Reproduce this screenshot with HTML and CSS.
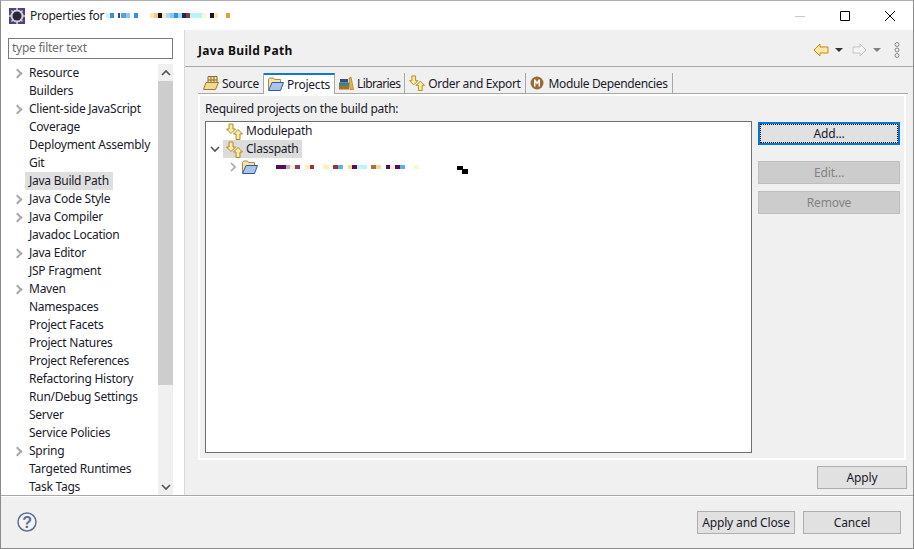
FILE: index.html

```html
<!DOCTYPE html>
<html lang="en">
<head>
  <meta charset="UTF-8" />
  <title>Properties</title>
  <link rel="stylesheet" href="styles.css">
</head>
<body>

<svg class="defs" width="0" height="0">
  <symbol id="ico-swap" viewBox="0 0 17 17">
    <path d="M2.500.5h4v5H9L4.500 10 0 5.500h2.500z" transform="translate(.5 .5)" fill="#fbe9a8" stroke="#b08a1e"/>
    <path d="M12 6.500 16.500 11H14v5.500h-4V11H7.500z" fill="#fbe9a8" stroke="#b08a1e"/>
  </symbol>
  <symbol id="ico-open" viewBox="0 0 16 14">
    <path d="M.5 13V2.500l1-1.500h4l1 1.500h6V5" fill="#f6e3a6" stroke="#a88a50"/>
    <path d="M.5 13.500 4 5.500h11.500l-3 8z" fill="#a9c4ea" stroke="#34589c"/>
  </symbol>
  <symbol id="ico-source" viewBox="0 0 16 14">
    <path d="M5 .5h9v7H5z" fill="#f6e3a6" stroke="#8a6a30"/>
    <path d="M8 .5v7M11 .5v7M5 4h9" stroke="#8a6a30" fill="none"/>
    <path d="M.5 13.500 3 6.500h12.500l-3 7z" fill="#f3d990" stroke="#a07c30"/>
  </symbol>
</svg>

<div class="window">

  <div class="titlebar">
    <svg class="app-icon" viewBox="0 0 16 16" width="16" height="16">
      <rect width="16" height="16" fill="#51407e"/>
      <circle cx="8" cy="8" r="6.500" fill="#d0d0d6"/>
      <circle cx="8" cy="8" r="4.500" fill="#2a2838"/>
      <path d="M8 0v3M8 13v3M0 8h3M13 8h3M2.500 2.500l2 2M13.500 2.500l-2 2M2.500 13.500l2-2M13.500 13.500l-2-2" stroke="#d0d0d6" stroke-width="1.500"/>
    </svg>
    <span class="title-text">Properties for</span>
    <span class="blur blur-title"></span>
    <div class="win-btns">
      <span class="win-btn"><svg width="12" height="12" viewBox="0 0 12 12"><path d="M1 6.500h10" stroke="#c8c8c8"/></svg></span>
      <span class="win-btn"><svg width="12" height="12" viewBox="0 0 12 12"><path d="M1.500 1.500h9v9h-9z" fill="none" stroke="#000"/></svg></span>
      <span class="win-btn"><svg width="12" height="12" viewBox="0 0 12 12"><path d="M1 1l10 10M11 1 1 11" stroke="#000"/></svg></span>
    </div>
  </div>

  <div class="body">
    <aside class="sidebar">
      <div class="filter">type filter text</div>
      <div class="nav">
        <ul class="nav-list">
          <li class="has-kids">Resource</li>
          <li>Builders</li>
          <li class="has-kids">Client-side JavaScript</li>
          <li>Coverage</li>
          <li>Deployment Assembly</li>
          <li>Git</li>
          <li class="selected">Java Build Path</li>
          <li class="has-kids">Java Code Style</li>
          <li class="has-kids">Java Compiler</li>
          <li>Javadoc Location</li>
          <li class="has-kids">Java Editor</li>
          <li>JSP Fragment</li>
          <li class="has-kids">Maven</li>
          <li>Namespaces</li>
          <li>Project Facets</li>
          <li>Project Natures</li>
          <li>Project References</li>
          <li>Refactoring History</li>
          <li>Run/Debug Settings</li>
          <li>Server</li>
          <li>Service Policies</li>
          <li class="has-kids">Spring</li>
          <li>Targeted Runtimes</li>
          <li>Task Tags</li>
        </ul>
        <div class="scrollbar">
          <div class="scroll-btn"><svg width="10" height="6" viewBox="0 0 10 6"><path d="M1 5l4-4 4 4" fill="none" stroke="#505050" stroke-width="1.600"/></svg></div>
          <div class="scroll-thumb"></div>
          <div class="scroll-track"></div>
          <div class="scroll-btn"><svg width="10" height="6" viewBox="0 0 10 6"><path d="M1 1l4 4 4-4" fill="none" stroke="#505050" stroke-width="1.600"/></svg></div>
        </div>
      </div>
    </aside>

    <main class="content">
      <header class="page-head">
        <h1>Java Build Path</h1>
        <div class="page-tools">
          <svg width="16" height="14" viewBox="0 0 16 14"><path d="M7 1 1 7l6 6v-3h8V4H7z" fill="#fbe9a8" stroke="#c98a12"/></svg>
          <span class="caret"></span>
          <svg class="fwd" width="15" height="14" viewBox="0 0 15 14"><path d="M8 1l6 6-6 6v-3H1V4h7z" fill="#f4f4f4" stroke="#c4c4c4"/></svg>
          <span class="caret caret-off"></span>
          <svg class="more" width="6" height="16" viewBox="0 0 6 16"><g fill="none" stroke="#8a8a8a"><circle cx="3" cy="2.500" r="2"/><circle cx="3" cy="8" r="2"/><circle cx="3" cy="13.500" r="2"/></g></svg>
        </div>
      </header>

      <div class="tabs">
        <div class="tab tab-first"><svg class="tab-ico" width="16" height="14"><use href="#ico-source"/></svg>Source</div>
        <div class="tab active"><svg class="tab-ico" width="16" height="14"><use href="#ico-open"/></svg>Projects</div>
        <div class="tab tab-libs">
          <svg class="tab-ico" width="16" height="16" viewBox="0 0 16 16">
            <rect x="1" y="11" width="10" height="3.500" fill="#b5682c"/>
            <rect x="1" y="7.500" width="10" height="3.500" fill="#2f8a80"/>
            <rect x="2" y="4" width="8" height="3.500" fill="#3a4a80"/>
            <path d="M11 3l2-1 2.500 12.500H12z" fill="#e8b24a" stroke="#9a6a18" stroke-width=".6"/>
          </svg>Libraries</div>
        <div class="tab tab-order"><svg class="tab-ico" width="16" height="16"><use href="#ico-swap"/></svg>Order and Export</div>
        <div class="tab tab-module">
          <svg class="tab-ico tab-ico-m" width="14" height="14" viewBox="0 0 14 14">
            <circle cx="7" cy="7" r="6.500" fill="#9a6a38"/>
            <path d="M4 10.500v-7h1.500L7 6l1.500-2.500H10v7H8.500V6.500L7 8.500l-1.500-2v4z" fill="#fff"/>
          </svg>Module Dependencies</div>
      </div>

      <section class="panel">
        <div class="panel-label">Required projects on the build path:</div>
        <div class="panel-row">
          <div class="tree">
            <div class="tree-row">
              <span class="twist"></span>
              <span class="node"><svg width="17" height="17"><use href="#ico-swap"/></svg><span class="node-text">Modulepath</span></span>
            </div>
            <div class="tree-row">
              <span class="twist"><svg width="10" height="6" viewBox="0 0 10 6"><path d="M1 1l4 4 4-4" fill="none" stroke="#505050" stroke-width="1.600"/></svg></span>
              <span class="node node-sel"><svg width="17" height="17"><use href="#ico-swap"/></svg><span class="node-text">Classpath</span></span>
            </div>
            <div class="tree-row tree-child">
              <span class="twist"><svg width="6" height="10" viewBox="0 0 6 10"><path d="M1 1l4 4-4 4" fill="none" stroke="#a8a8a8" stroke-width="1.600"/></svg></span>
              <span class="node node-project"><svg width="16" height="14"><use href="#ico-open"/></svg><span class="blur blur-path"></span></span>
            </div>
          </div>
          <div class="side-btns">
            <button class="btn btn-focus"><span>Add...</span></button>
            <button class="btn btn-off btn-edit">Edit...</button>
            <button class="btn btn-off">Remove</button>
          </div>
        </div>
      </section>

      <div class="apply-row"><button class="btn btn-apply">Apply</button></div>
    </main>
  </div>

  <footer class="footer">
    <svg width="20" height="20" viewBox="0 0 20 20">
      <circle cx="10" cy="10" r="9" fill="#f4f4f6" stroke="#5f7090" stroke-width="1.500"/>
      <text x="10" y="15.500" text-anchor="middle" class="help-mark">?</text>
    </svg>
    <div class="footer-btns">
      <button class="btn btn-foot">Apply and Close</button>
      <button class="btn btn-foot">Cancel</button>
    </div>
  </footer>

</div>

</body>
</html>
```

FILE: styles.css

```css
body {
  margin: 0;
  font-family: "Noto Sans", "Open Sans", sans-serif;
  font-size: 12px;
  letter-spacing: -0.25px;
  color: #1a1a2a;
  background-color: #f0f0f0;
}

.defs {
  display: block;
  height: 0;
}

.window {
  box-sizing: border-box;
  width: 914px;
  height: 549px;
  border: 1px solid #8a8a8a;
  border-top-color: #b0b0b0;
  display: flex;
  flex-direction: column;
  overflow: hidden;
}

/* title bar */
.titlebar {
  height: 29px;
  flex: none;
  background-color: #fff;
  display: flex;
  align-items: center;
  padding-left: 8px;
}

.app-icon {
  margin-right: 5px;
}

.title-text {
  color: #222;
}

.blur {
  display: block;
  height: 5px;
}

.blur-title {
  width: 124px;
  margin-left: 2px;
  margin-bottom: 1px;
  background: linear-gradient(90deg,
    #cff4ff 0 4px, #3a8fdc 4px 8px, #fff 8px 12px, #2a4a9a 12px 14px, #fff 14px 15px,
    #5a9fd8 15px 20px, #8fc8ee 20px 24px, #fff 24px 28px, #3a8fdc 28px 32px,
    #fff 32px 44px, #fde9b0 44px 48px, #f5c690 48px 52px, #111 52px 56px,
    #f5e9c0 56px 60px, #9ee0f0 60px 64px, #8fc8ee 64px 68px, #3a8fdc 68px 72px,
    #9ee0f0 72px 76px, #1a2a50 76px 80px, #8a3a3a 80px 84px, #b8f4ff 84px 96px,
    #fdf8c8 96px 100px, #fff 100px 104px, #1a1030 104px 108px, #fde9b0 108px 112px,
    #fff 112px 120px, #e0a040 120px 124px);
}

.win-btns {
  margin-left: auto;
  margin-right: 1px;
  display: flex;
}

.win-btn {
  width: 45px;
  display: flex;
  justify-content: center;
}

/* main area */
.body {
  flex: 1;
  display: flex;
  min-height: 0;
}

.sidebar {
  width: 165px;
  flex: none;
  background-color: #fff;
  border-right: 1px solid #d8d8d8;
  display: flex;
  flex-direction: column;
  padding: 8px 11px 0 7px;
}

.filter {
  box-sizing: border-box;
  height: 21px;
  line-height: 18px;
  border: 1px solid #7a7a7a;
  padding-left: 3px;
  color: #6d6d6d;
  flex: none;
}

.nav {
  flex: 1;
  display: flex;
  margin-top: 5px;
  min-height: 0;
}

.nav-list {
  list-style: none;
  margin: 0;
  padding: 0;
  flex: 1;
  overflow: hidden;
}

.nav-list li {
  height: 18px;
  line-height: 18px;
  padding-left: 21px;
  white-space: nowrap;
  position: relative;
}

.nav-list li.has-kids::before {
  content: "";
  position: absolute;
  left: 6px;
  top: 6px;
  width: 5px;
  height: 5px;
  border-top: 2px solid #a8a8a8;
  border-right: 2px solid #a8a8a8;
  transform: rotate(45deg);
}

.nav-list li.selected {
  background: linear-gradient(90deg, transparent 17px, #dfdfdf 17px 105px, transparent 105px);
}

.scrollbar {
  width: 15px;
  flex: none;
  display: flex;
  flex-direction: column;
  background-color: #f0f0f0;
}

.scroll-btn {
  height: 17px;
  flex: none;
  display: flex;
  align-items: center;
  justify-content: center;
}

.scroll-thumb {
  height: 304px;
  flex: none;
  background-color: #cdcdcd;
}

.scroll-track {
  flex: 1;
}

/* right side */
.content {
  flex: 1;
  display: flex;
  flex-direction: column;
  min-width: 0;
  background-color: #f0f0f0;
}

.page-head {
  height: 32px;
  flex: none;
  border-bottom: 1px solid #a8a8a8;
  display: flex;
  align-items: center;
  padding: 4px 13px 0 13px;
}

.page-head h1 {
  margin: 0;
  font-size: 12px;
  font-weight: 700;
  letter-spacing: 0.33px;
  color: #111;
}

.page-tools {
  margin-left: auto;
  display: flex;
  align-items: center;
}

.page-tools .caret {
  margin: 0 0 0 6px;
}

.fwd {
  margin-left: 9px;
}

.caret {
  width: 0;
  height: 0;
  border-left: 4px solid transparent;
  border-right: 4px solid transparent;
  border-top: 4px solid #333;
}

.caret-off {
  border-top-color: #808080;
}

.more {
  margin-left: 13px;
}

.tabs {
  display: flex;
  height: 20px;
  margin: 6px 5px 0 13px;
  padding-left: 2px;
  border-bottom: 1px solid #a8a8a8;
  flex: none;
}

.tab {
  display: flex;
  align-items: center;
  gap: 3px;
  padding: 0 4px;
  border-right: 1px solid #a8a8a8;
  white-space: nowrap;
}

.tab-first {
  padding-left: 3px;
}

.tab.active {
  background-color: #fff;
  border-top: 2px solid #0a7ad8;
  margin-bottom: -1px;
  padding-bottom: 1px;
}

/* these labels run wide in this font */
.tab-libs {
  letter-spacing: -0.6px;
  padding-left: 3px;
}

.tab-order {
  letter-spacing: -0.36px;
}

.tab-module {
  letter-spacing: -0.36px;
}

.tab-ico {
  flex: none;
}

.tab-ico-m {
  margin-right: 2px;
}

.panel {
  margin: 0 7px 0 13px;
  border: 2px solid #fff;
  height: 366px;
  box-sizing: border-box;
  padding: 5px;
  display: flex;
  flex-direction: column;
  flex: none;
}

.panel-label {
  height: 20px;
  line-height: 16px;
  flex: none;
}

.panel-row {
  flex: 1;
  display: flex;
  min-height: 0;
}

.tree {
  width: 547px;
  box-sizing: border-box;
  flex: none;
  height: 332px;
  background-color: #fff;
  border: 1px solid #6e6e6e;
}

.tree-row {
  height: 18px;
  display: flex;
  align-items: center;
  white-space: nowrap;
}

.tree-child {
  padding-left: 18px;
}

.twist {
  width: 17px;
  flex: none;
  display: flex;
  justify-content: center;
}

.node {
  display: flex;
  align-items: center;
  gap: 3px;
  height: 18px;
  padding: 0 3px;
}

.node-text {
  margin-top: -2px;
}

.node-project {
  padding-left: 1px;
}

.node-sel {
  background-color: #dcdcdc;
}

.blur-path {
  width: 192px;
  height: 9px;
  margin-left: 15px;
  margin-top: 4px;
  background:
    linear-gradient(#000, #000) 181px 1px / 6px 4px no-repeat,
    linear-gradient(#000, #000) 186px 4px / 6px 5px no-repeat,
    linear-gradient(90deg,
      #5a0a5a 0 10px, #c8a0c8 10px 14px, #fdf0c8 14px 19px, #8a3a6a 19px 24px, #fff 24px 29px,
      #fdf0b0 29px 34px, #8a3a3a 34px 38px, #fff 38px 47px, #fdf0b0 47px 53px, #fff 53px 57px,
      #8a3a3a 57px 62px, #60b0e8 62px 67px, #fff 67px 72px, #f5e090 72px 76px,
      #5a0a5a 76px 81px, #b8f4ff 81px 91px, #fff 91px 95px, #b0703a 95px 100px,
      #f5d8a0 100px 105px, #fff 105px 110px, #5a0a5a 110px 114px, #fdf0c8 114px 119px,
      #5a0a5a 119px 124px, #60b0e8 124px 129px, #fff 129px 138px, #fdf8c8 138px 143px, #fff 143px)
      0 0 / 100% 4px no-repeat;
}

.side-btns {
  margin-left: 6px;
  display: flex;
  flex-direction: column;
  width: 142px;
  gap: 7px;
  flex: none;
}

.btn {
  box-sizing: border-box;
  font: inherit;
  letter-spacing: -0.15px;
  color: #1a1a2a;
  height: 23px;
  padding: 0;
  background-color: #e1e1e1;
  border: 1px solid #adadad;
}

.btn-focus {
  border: 2px solid #0078d7;
  margin-bottom: 9px;
  margin-top: 1px;
}

.btn-focus span {
  display: block;
  height: 19px;
  line-height: 17px;
  border: 1px dotted #000;
  box-sizing: border-box;
}

.btn-off {
  background-color: #cccccc;
  border-color: #bfbfbf;
  color: #838383;
}

.apply-row {
  display: flex;
  justify-content: flex-end;
  padding: 6px 6px 0 0;
}

.btn-apply {
  width: 90px;
}

.footer {
  flex: none;
  height: 53px;
  border-top: 1px solid #a8a8a8;
  box-shadow: inset 0 1px 0 #fff;
  display: flex;
  align-items: center;
  padding: 0 12px 0 16px;
  box-sizing: border-box;
}

.help-mark {
  font-family: "Liberation Sans", sans-serif;
  font-size: 16px;
  font-weight: 700;
  fill: #5f7090;
}

.footer-btns {
  margin-left: auto;
  display: flex;
  gap: 8px;
}

.btn-foot {
  width: 98px;
}
```
